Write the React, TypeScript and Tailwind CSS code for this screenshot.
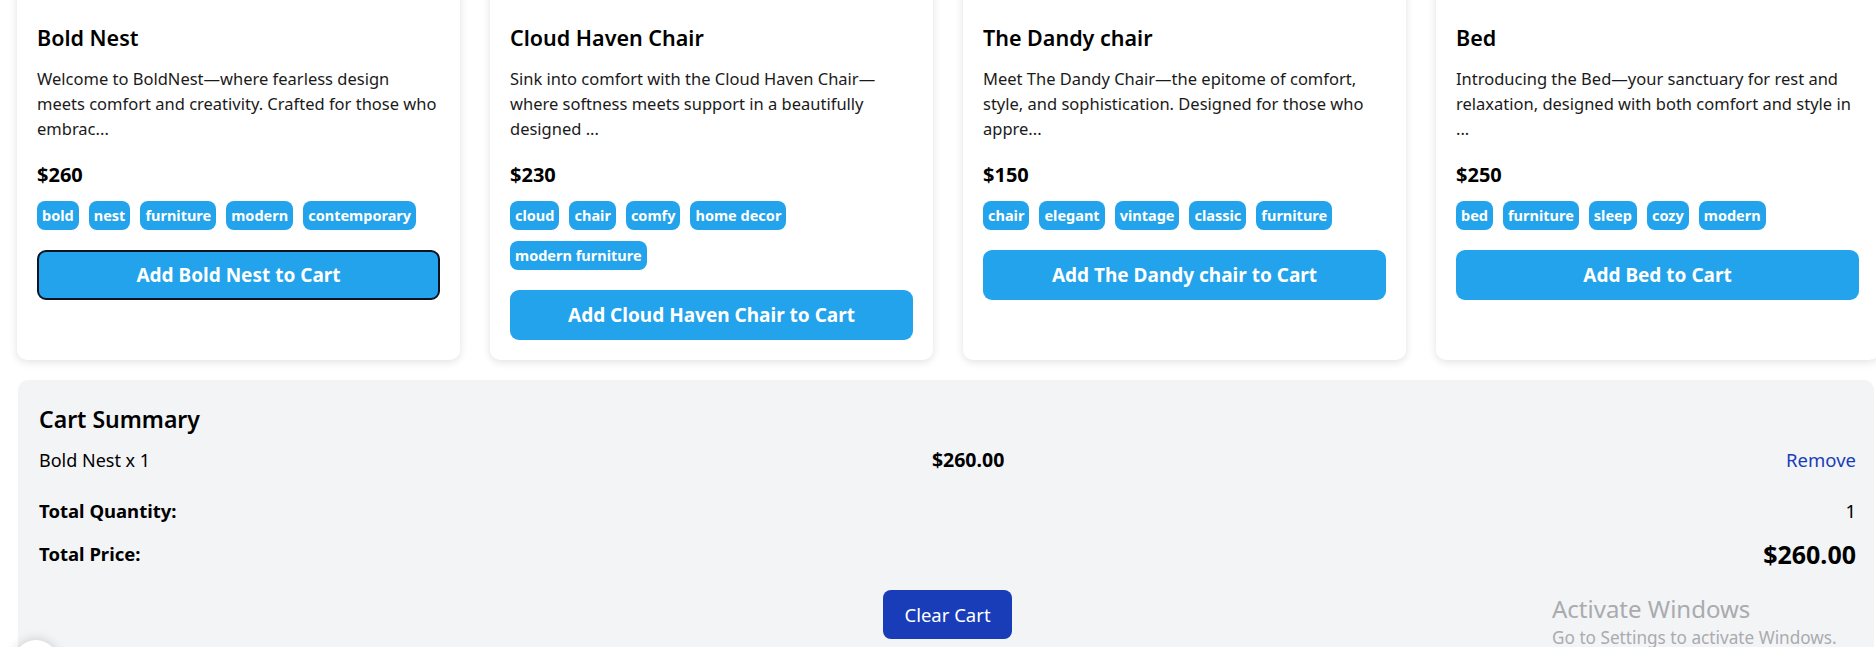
import React from "react";

type Product = {
  name: string;
  description: string[];
  price: number;
  tags: string[];
};

// descriptions are cut at 100 chars by the store, lines kept as they wrap in the card
const products: Product[] = [
  {
    name: "Bold Nest",
    description: [
      "Welcome to BoldNest\u2014where fearless design",
      "meets comfort and creativity. Crafted for those who",
      "embrac...",
    ],
    price: 260,
    tags: ["bold", "nest", "furniture", "modern", "contemporary"],
  },
  {
    name: "Cloud Haven Chair",
    description: [
      "Sink into comfort with the Cloud Haven Chair\u2014",
      "where softness meets support in a beautifully",
      "designed ...",
    ],
    price: 230,
    tags: ["cloud", "chair", "comfy", "home decor", "modern furniture"],
  },
  {
    name: "The Dandy chair",
    description: [
      "Meet The Dandy Chair\u2014the epitome of comfort,",
      "style, and sophistication. Designed for those who",
      "appre...",
    ],
    price: 150,
    tags: ["chair", "elegant", "vintage", "classic", "furniture"],
  },
  {
    name: "Bed",
    description: [
      "Introducing the Bed\u2014your sanctuary for rest and",
      "relaxation, designed with both comfort and style in",
      "...",
    ],
    price: 250,
    tags: ["bed", "furniture", "sleep", "cozy", "modern"],
  },
];

function ProductCard({ product, focused }: { product: Product; focused?: boolean }) {
  return (
    <div className="flex flex-col rounded-[10px] bg-white px-5 pt-10 pb-5 shadow-[0_2px_8px_rgba(0,0,0,0.12)]">
      <h2 className="text-[21.5px] leading-[30px] font-semibold text-black">{product.name}</h2>
      <p className="mt-[13px] text-[16.5px] leading-[25px] whitespace-nowrap text-[#1a1a1a]">
        {product.description.map((line) => (
          <span key={line} className="block">
            {line}
          </span>
        ))}
      </p>
      <p className="mt-5 text-[20px] leading-[28px] font-bold text-black">${product.price}</p>
      <div className="mt-3 flex flex-wrap gap-x-[10px] gap-y-[11px]">
        {product.tags.map((tag) => (
          <span
            key={tag}
            className="flex h-[29px] items-center rounded-[8px] bg-[#23a3eb] px-[5px] text-[14.5px] font-bold text-white"
          >
            {tag}
          </span>
        ))}
      </div>
      <button
        className={`mt-5 h-[50px] w-full rounded-[9px] bg-[#23a3eb] text-[19px] font-bold text-white ${
          focused ? "border-2 border-[#0b1220]" : ""
        }`}
      >
        Add {product.name} to Cart
      </button>
    </div>
  );
}

export default function App() {
  return (
    <div
      className="relative h-[647px] w-full overflow-hidden bg-white"
      style={{ fontFamily: '"Noto Sans", "Open Sans", sans-serif' }}
    >
      {/* Product cards */}
      <div className="-mt-[17px] grid w-max grid-cols-[repeat(4,443px)] gap-[30px] pl-[17px]">
        {products.map((p, i) => (
          <ProductCard key={p.name} product={p} focused={i === 0} />
        ))}
      </div>

      {/* Cart summary */}
      <div className="mt-[20px] ml-[18px] w-[1856px] rounded-[10px] bg-[#f3f4f6] pt-[23px] pr-[18px] pb-8 pl-[21px]">
        <h3 className="text-[23px] leading-[32px] font-semibold text-black">Cart Summary</h3>
        <div className="mt-[11px] flex items-center justify-between text-[18px] leading-[28px] text-black">
          <span>Bold Nest x 1</span>
          <span className="text-[19.5px] font-bold">$260.00</span>
          <button className="text-[18.5px] text-blue-800">Remove</button>
        </div>
        <div className="mt-[23px] flex items-center justify-between text-[18.5px] leading-[28px] text-black">
          <span className="font-bold">Total Quantity:</span>
          <span>1</span>
        </div>
        <div className="mt-3 flex items-center justify-between leading-[34px] text-black">
          <span className="text-[18.5px] font-bold">Total Price:</span>
          <span className="text-[25px] font-bold">$260.00</span>
        </div>
        <div className="mt-[19px] flex justify-center">
          <button className="h-[49px] rounded-[8px] bg-blue-800 px-[21px] text-[18.5px] text-white">
            Clear Cart
          </button>
        </div>
      </div>

      {/* Windows watermark */}
      <div className="pointer-events-none absolute top-[593px] left-[1552px] text-[#a9abae]">
        <div className="text-[24px] leading-[32px]">Activate Windows</div>
        <div className="mt-[2px] text-[17.2px] leading-[22px]">Go to Settings to activate Windows.</div>
      </div>

      {/* floating widget peeking from the bottom */}
      <div className="absolute top-[640px] left-[14px] h-[44px] w-[44px] rounded-full bg-white shadow-[0_0_12px_rgba(0,0,0,0.18)]" />
    </div>
  );
}
